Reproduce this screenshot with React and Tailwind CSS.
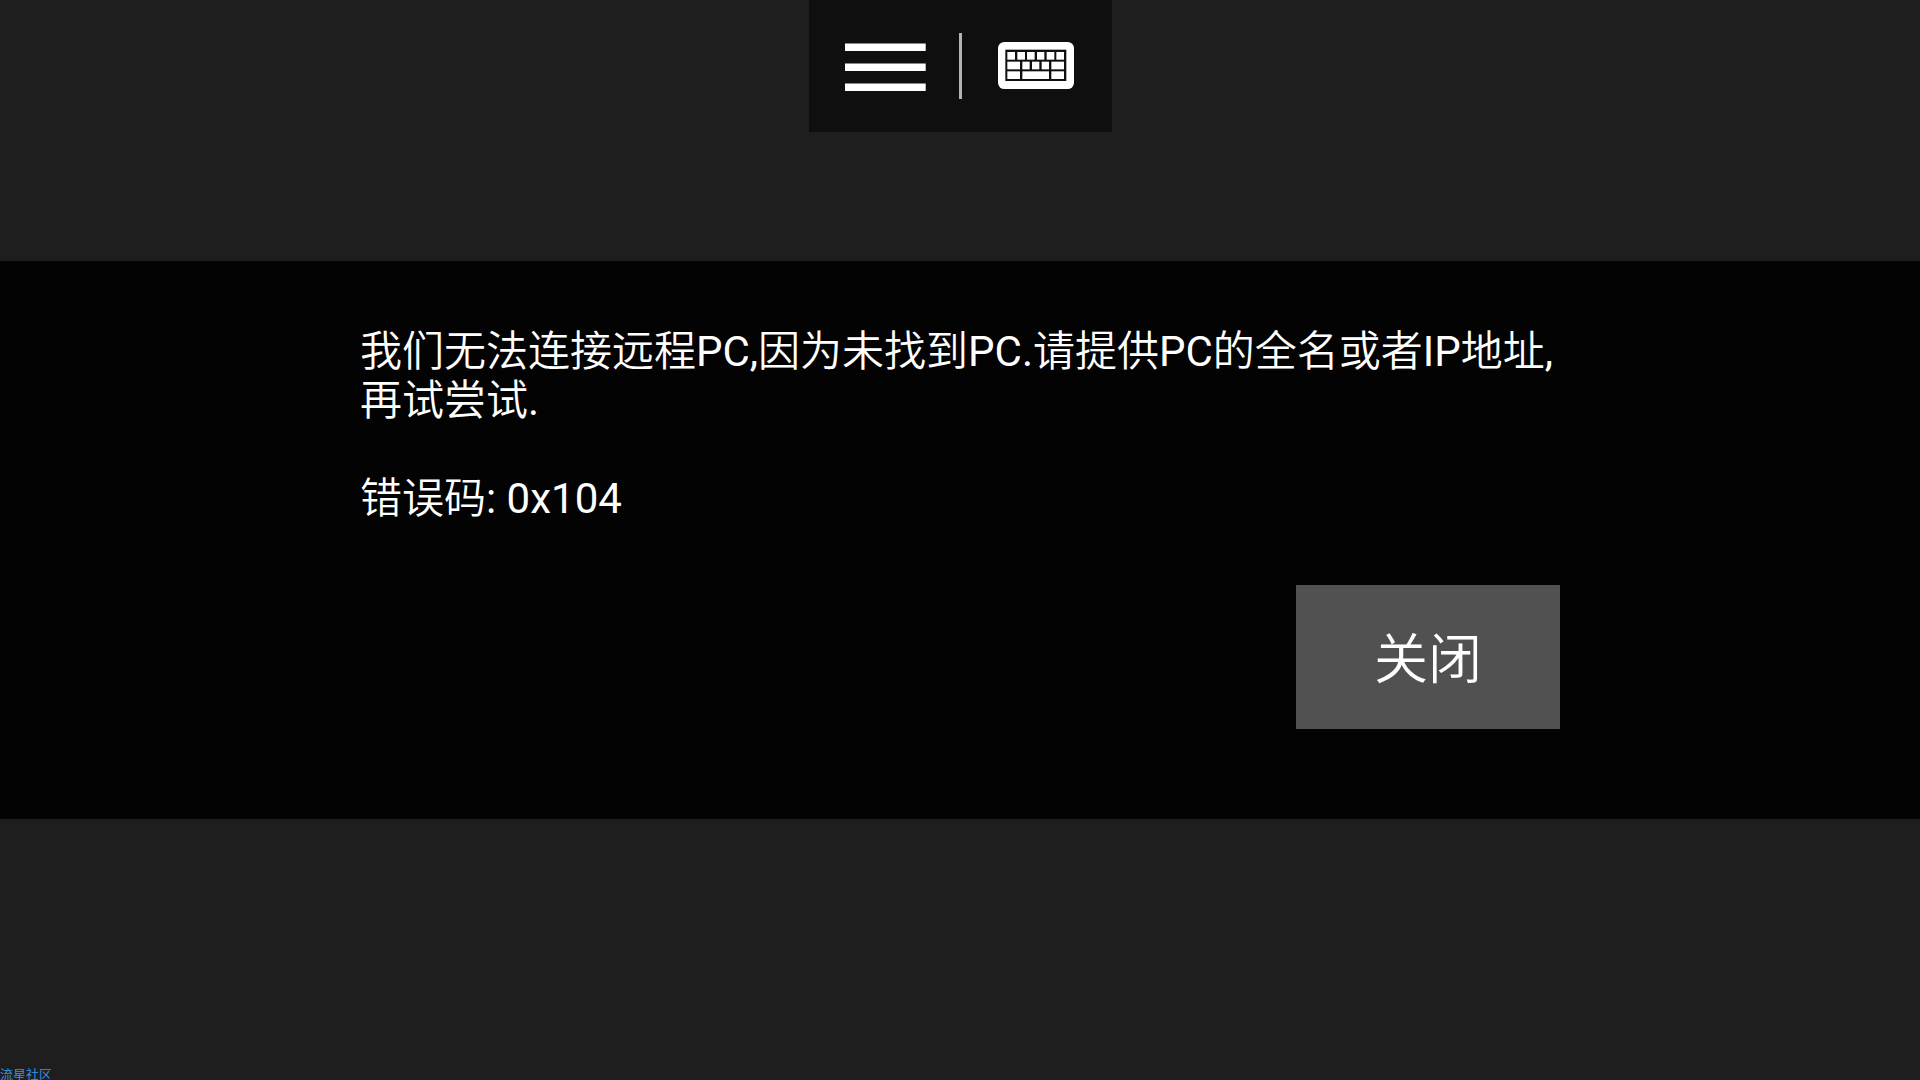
function MenuIcon() {
  return (
    <svg width="81" height="48" viewBox="0 0 81 48" fill="#fff" aria-hidden="true">
      <rect x="0" y="0.5" width="80.7" height="7.5" />
      <rect x="0" y="20.5" width="80.7" height="7.5" />
      <rect x="0" y="40.5" width="80.7" height="7.5" />
    </svg>
  );
}

const KEYS = [
  [28, 30, 23], [58, 30, 23], [87, 30, 23], [117, 30, 22], [146, 30, 23], [175, 30, 23],
  [28, 59, 38], [73, 59, 22], [102, 59, 22], [131, 59, 22], [160, 59, 38],
  [28, 88, 38], [73, 88, 80], [160, 88, 38],
];

function KeyboardIcon() {
  return (
    <svg width="76" height="47" viewBox="0 0 228 141" aria-hidden="true">
      <rect width="228" height="141" rx="19" fill="#fff" />
      <rect x="22" y="23" width="183" height="94" fill="#0f0f0f" />
      {KEYS.map(([x, y, w]) => (
        <rect key={`${x}-${y}`} x={x} y={y} width={w} height="23" fill="#fff" />
      ))}
    </svg>
  );
}

export default function App() {
  return (
    <div className="grid min-h-screen grid-rows-[1fr_auto_1fr] bg-[#1e1e1e] font-['Roboto','Noto_Sans_CJK_SC_DemiLight','Noto_Sans_CJK_SC',sans-serif] text-white">
      <header className="flex items-start justify-center">
        <div className="ml-px flex h-[132px] items-center bg-[#0f0f0f]">
          <button type="button" aria-label="菜单" className="flex h-full w-[150px] items-center justify-center pl-0.5 pt-0.5">
            <MenuIcon />
          </button>
          <div className="h-[66px] w-[3px] bg-[#b3b3b3]" />
          <button type="button" aria-label="键盘" className="flex h-full w-[150px] items-center justify-center pr-0.5 pb-px">
            <KeyboardIcon />
          </button>
        </div>
      </header>

      <main role="alertdialog" aria-labelledby="message" className="bg-[#030303] pt-[66px] pb-[90px]">
        <div className="mx-auto flex max-w-[1200px] flex-col gap-[62px]">
          <div id="message" className="flex flex-col gap-[49px] text-[42px] leading-[49px]">
            <p>我们无法连接远程PC,因为未找到PC.请提供PC的全名或者IP地址,再试尝试.</p>
            <p>错误码: 0x104</p>
          </div>
          <button type="button" className="h-[144px] w-[264px] self-end bg-[#515151] pt-2 text-[54px] leading-none">
            关闭
          </button>
        </div>
      </main>

      <footer className="flex items-end">
        <span className="text-[13px] leading-[11px] text-[#3399ee]">流星社区</span>
      </footer>
    </div>
  );
}
